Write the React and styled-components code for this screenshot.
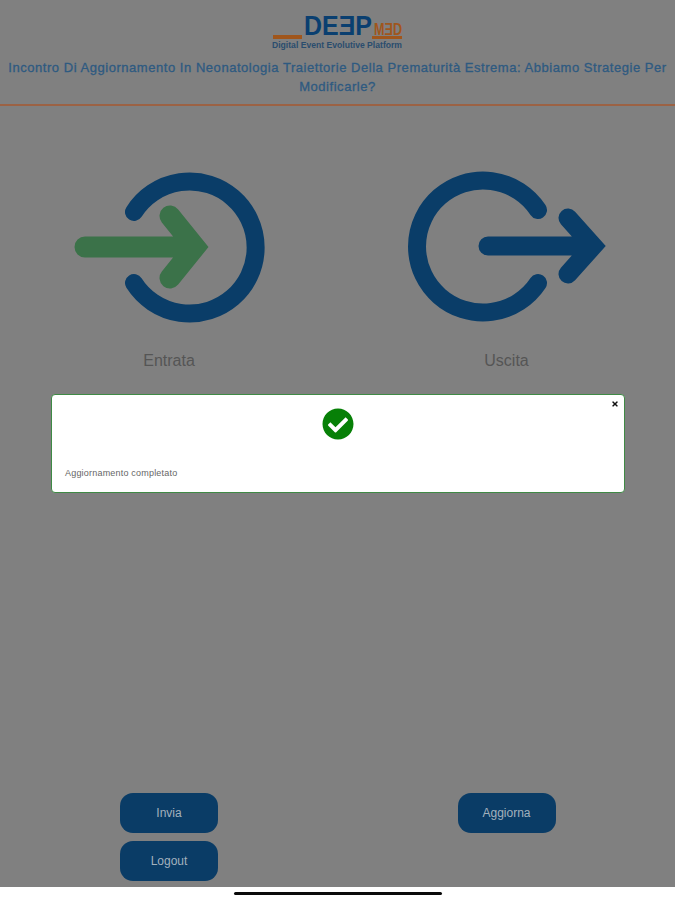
import React from "react";
import styled, { createGlobalStyle } from "styled-components";
import { FaCheckCircle, FaTimes } from "react-icons/fa";

const Global = createGlobalStyle`
  html, body { margin: 0; padding: 0; background: #fff; }
  body { font-family: "Liberation Sans", Arial, sans-serif; }
  * { box-sizing: border-box; }
`;

const Page = styled.div`
  position: relative;
  width: 675px;
  height: 900px;
  display: flex;
  flex-direction: column;
  overflow: hidden;
`;

const Screen = styled.div`
  height: 887px;
  background: #808080;
  display: flex;
  flex-direction: column;
`;

const Header = styled.header`
  height: 106px;
  padding-top: 13px;
  border-bottom: 2px solid #9c6244;
  display: flex;
  flex-direction: column;
  align-items: center;
`;

const Logo = styled.svg`
  display: block;
  width: 132px;
  height: 38px;
  flex: none;
  overflow: visible;
`;

const Title = styled.h1`
  margin: 7px 0 0;
  width: 100%;
  padding: 0 5px;
  text-align: center;
  font-size: 13px;
  line-height: 19px;
  font-weight: 400;
  letter-spacing: 0.54px;
  color: #2e5a80;
  -webkit-text-stroke: 0.3px #2e5a80;
`;

const Actions = styled.section`
  display: grid;
  grid-template-columns: 338px 337px;
  padding-top: 59px;
`;

const Action = styled.div`
  display: flex;
  flex-direction: column;
  align-items: center;
`;

const ActionIcon = styled.svg`
  display: block;
  width: 100%;
  height: 170px;
`;

const ActionLabel = styled.div`
  margin-top: 16px;
  font-size: 16px;
  line-height: 20px;
  color: #555;
`;

const Footer = styled.footer`
  margin-top: auto;
  padding-bottom: 6px;
  display: grid;
  grid-template-columns: 338px 337px;
`;

const FooterColumn = styled.div`
  display: flex;
  flex-direction: column;
  align-items: center;
  gap: 8px;
`;

const Button = styled.button`
  width: 98px;
  height: 40px;
  border: 0;
  border-radius: 13px;
  background: #0a3c66;
  color: #a3b1bd;
  font: 12px "Liberation Sans", Arial, sans-serif;
`;

const HomeArea = styled.div`
  flex: 1;
  background: #fff;
  display: flex;
  justify-content: center;
  padding-top: 5px;
`;

const HomeBar = styled.div`
  width: 208px;
  height: 3px;
  border-radius: 2px;
  background: #0a0a0a;
`;

const Toast = styled.div`
  position: absolute;
  left: 51px;
  top: 394px;
  width: 574px;
  height: 99px;
  background: #fff;
  border: 1.5px solid #3f8a45;
  border-radius: 4px;
  padding: 13px 13px 0;
  display: flex;
  flex-direction: column;
`;

const ToastIcon = styled.div`
  display: flex;
  justify-content: center;
  color: #078007;
  font-size: 32px;
  line-height: 0;
`;

const ToastText = styled.div`
  margin-top: 27px;
  font-size: 9px;
  line-height: 12px;
  letter-spacing: 0.2px;
  color: #666;
`;

const Close = styled.span`
  position: absolute;
  top: 5px;
  right: 5px;
  display: flex;
  font-size: 8px;
  color: #111;
`;

export default function App() {
  return (
    <Page>
      <Global />
      <Screen>
        <Header>
          <Logo viewBox="272 13 132 38" aria-label="DeepMed">
            <rect x="273" y="35" width="29" height="4" fill="#a0561c" />
            <rect x="372" y="36" width="30" height="3" fill="#a0561c" />
            <text x="304" y="34.5" fontFamily="Liberation Sans" fontWeight="700" fontSize="28" textLength="68" lengthAdjust="spacingAndGlyphs" fill="#0a3f70">DEƎP</text>
            <text x="374" y="35" fontFamily="Liberation Sans" fontWeight="700" fontSize="16" textLength="28" lengthAdjust="spacingAndGlyphs" fill="#a0561c">MƎD</text>
            <text x="272" y="47.5" fontFamily="Liberation Sans" fontWeight="700" fontSize="8.5" textLength="130" lengthAdjust="spacingAndGlyphs" fill="#2a4d6e">Digital Event Evolutive Platform</text>
          </Logo>
          <Title>Incontro Di Aggiornamento In Neonatologia Traiettorie Della Prematurità Estrema: Abbiamo Strategie Per Modificarle?</Title>
        </Header>
        <Actions>
          <Action>
            <ActionIcon viewBox="0 165 338 170">
              <path d="M134 212 A66 66 0 1 1 134 283" fill="none" stroke="#0a3d68" strokeWidth="18" strokeLinecap="round" />
              <path d="M85 247 H190 M170 216 L195 247 L170 278" fill="none" stroke="#3b7249" strokeWidth="21" strokeLinecap="round" strokeLinejoin="miter" />
            </ActionIcon>
            <ActionLabel>Entrata</ActionLabel>
          </Action>
          <Action>
            <ActionIcon viewBox="338 165 337 170">
              <path d="M538 210 A66 66 0 1 0 538 283" fill="none" stroke="#0a3d68" strokeWidth="18" strokeLinecap="round" />
              <path d="M488 246 H585 M568 218 L593 246 L568 274" fill="none" stroke="#0a3d68" strokeWidth="19" strokeLinecap="round" strokeLinejoin="miter" />
            </ActionIcon>
            <ActionLabel>Uscita</ActionLabel>
          </Action>
        </Actions>
        <Footer>
          <FooterColumn>
            <Button>Invia</Button>
            <Button>Logout</Button>
          </FooterColumn>
          <FooterColumn>
            <Button>Aggiorna</Button>
          </FooterColumn>
        </Footer>
      </Screen>
      <HomeArea>
        <HomeBar />
      </HomeArea>
      <Toast>
        <Close><FaTimes /></Close>
        <ToastIcon><FaCheckCircle /></ToastIcon>
        <ToastText>Aggiornamento completato</ToastText>
      </Toast>
    </Page>
  );
}
